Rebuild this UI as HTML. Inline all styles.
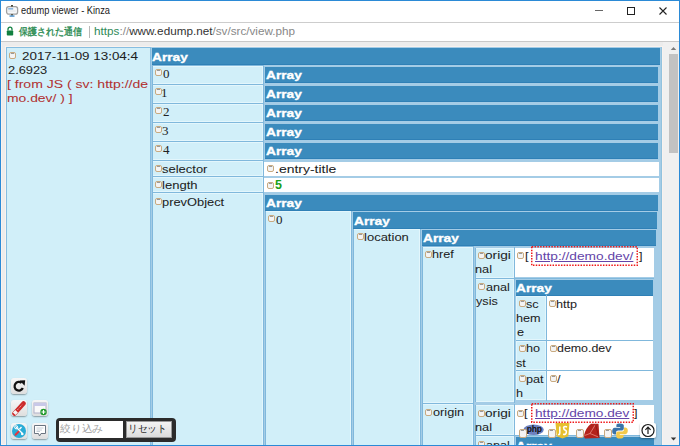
<!DOCTYPE html><html><head><meta charset="utf-8"><style>
*{margin:0;padding:0;box-sizing:border-box}
html,body{width:680px;height:446px;overflow:hidden;background:#ececec;position:relative;font-family:"Liberation Sans",sans-serif}
div,span,i,svg{position:absolute;display:block}
span{white-space:pre;line-height:0;height:0}
.v{font-size:11.5px;letter-spacing:0px;color:#1e1e1e;-webkit-text-stroke:0.05px currentColor}
.b{font-size:11.5px;letter-spacing:0px;color:#fff;font-weight:bold;-webkit-text-stroke:0.35px #fff}
.s{font-family:"Liberation Serif",serif;font-size:13px;color:#222}
.g{font-size:12.5px;color:#18a018;font-weight:bold}
.t{font-size:10.5px;color:#1a1a1a}
.u{font-size:11.5px;color:#333}
.j{font-size:9.5px;color:#3a8a5a}
.ic{width:7px;height:7px;border:1px solid #c8aa80;border-radius:2px;background:#f4f4f4}
.ic:after{content:"";position:absolute;left:1px;top:0;width:3px;height:1px;background:#9a9a9a}
</style></head><body>
<div style="left:1px;top:1px;width:678px;height:21px;background:#fff;"></div>
<div style="left:1px;top:22px;width:678px;height:1px;background:#cdcdcd;"></div>
<div style="left:1px;top:23px;width:678px;height:18px;background:#fff;"></div>
<div style="left:1px;top:41px;width:678px;height:1px;background:#c8c8c8;"></div>
<div style="left:1px;top:42px;width:1px;height:403px;background:#f9f2ee;"></div>
<div style="left:5px;top:46px;width:658px;height:1px;background:#f9f2ee;"></div>
<div style="left:5px;top:46px;width:1px;height:399px;background:#f9f2ee;"></div>
<div style="left:662px;top:46px;width:1px;height:399px;background:#f9f2ee;"></div>
<div style="left:1px;top:444px;width:678px;height:1px;background:#f9f2ee;"></div>
<div style="left:6px;top:47px;width:145px;height:400px;background:#d1eff9;border:1px solid #86bde0;"></div>
<div style="left:151px;top:47px;width:511px;height:400px;background:#a4cce6;"></div>
<div style="left:661px;top:47px;width:1px;height:400px;background:#92c2de;"></div>
<div style="left:152px;top:48px;width:508px;height:17px;background:#3b8bbd;box-shadow:inset 0 -1px 0 #2f80b6;"></div>
<div style="left:152px;top:65px;width:112px;height:1px;background:#80b8dc;"></div>
<div style="left:152px;top:66px;width:111px;height:18px;background:#d1eff9;box-shadow:inset 0 0 0 1px #e3f6fc;"></div>
<div style="left:152px;top:66px;width:1px;height:18px;background:#80b8dc;"></div>
<div style="left:263px;top:65px;width:1px;height:20px;background:#80b8dc;"></div>
<div style="left:265px;top:67px;width:393px;height:16px;background:#3b8bbd;box-shadow:inset 0 -1px 0 #2f80b6;"></div>
<div style="left:152px;top:84px;width:112px;height:1px;background:#80b8dc;"></div>
<div style="left:152px;top:85px;width:111px;height:18px;background:#d1eff9;box-shadow:inset 0 0 0 1px #e3f6fc;"></div>
<div style="left:152px;top:85px;width:1px;height:18px;background:#80b8dc;"></div>
<div style="left:263px;top:84px;width:1px;height:20px;background:#80b8dc;"></div>
<div style="left:265px;top:86px;width:393px;height:16px;background:#3b8bbd;box-shadow:inset 0 -1px 0 #2f80b6;"></div>
<div style="left:152px;top:103px;width:112px;height:1px;background:#80b8dc;"></div>
<div style="left:152px;top:104px;width:111px;height:18px;background:#d1eff9;box-shadow:inset 0 0 0 1px #e3f6fc;"></div>
<div style="left:152px;top:104px;width:1px;height:18px;background:#80b8dc;"></div>
<div style="left:263px;top:103px;width:1px;height:20px;background:#80b8dc;"></div>
<div style="left:265px;top:105px;width:393px;height:16px;background:#3b8bbd;box-shadow:inset 0 -1px 0 #2f80b6;"></div>
<div style="left:152px;top:122px;width:112px;height:1px;background:#80b8dc;"></div>
<div style="left:152px;top:123px;width:111px;height:18px;background:#d1eff9;box-shadow:inset 0 0 0 1px #e3f6fc;"></div>
<div style="left:152px;top:123px;width:1px;height:18px;background:#80b8dc;"></div>
<div style="left:263px;top:122px;width:1px;height:20px;background:#80b8dc;"></div>
<div style="left:265px;top:124px;width:393px;height:16px;background:#3b8bbd;box-shadow:inset 0 -1px 0 #2f80b6;"></div>
<div style="left:152px;top:141px;width:112px;height:1px;background:#80b8dc;"></div>
<div style="left:152px;top:142px;width:111px;height:18px;background:#d1eff9;box-shadow:inset 0 0 0 1px #e3f6fc;"></div>
<div style="left:152px;top:142px;width:1px;height:18px;background:#80b8dc;"></div>
<div style="left:263px;top:141px;width:1px;height:20px;background:#80b8dc;"></div>
<div style="left:265px;top:143px;width:393px;height:16px;background:#3b8bbd;box-shadow:inset 0 -1px 0 #2f80b6;"></div>
<div style="left:152px;top:160px;width:112px;height:1px;background:#80b8dc;"></div>
<div style="left:152px;top:161px;width:111px;height:15px;background:#d1eff9;box-shadow:inset 0 0 0 1px #e3f6fc;"></div>
<div style="left:152px;top:161px;width:1px;height:15px;background:#80b8dc;"></div>
<div style="left:263px;top:160px;width:1px;height:17px;background:#80b8dc;"></div>
<div style="left:264px;top:162px;width:395px;height:14px;background:#fff;"></div>
<div style="left:152px;top:176px;width:112px;height:1px;background:#80b8dc;"></div>
<div style="left:152px;top:177px;width:111px;height:15px;background:#d1eff9;box-shadow:inset 0 0 0 1px #e3f6fc;"></div>
<div style="left:152px;top:177px;width:1px;height:15px;background:#80b8dc;"></div>
<div style="left:263px;top:176px;width:1px;height:17px;background:#80b8dc;"></div>
<div style="left:264px;top:178px;width:395px;height:14px;background:#fff;"></div>
<div style="left:152px;top:192px;width:112px;height:1px;background:#80b8dc;"></div>
<div style="left:152px;top:193px;width:111px;height:253px;background:#d1eff9;box-shadow:inset 0 0 0 1px #e3f6fc;"></div>
<div style="left:152px;top:193px;width:1px;height:253px;background:#80b8dc;"></div>
<div style="left:263px;top:192px;width:1px;height:254px;background:#80b8dc;"></div>
<div style="left:265px;top:195px;width:393px;height:16px;background:#3b8bbd;box-shadow:inset 0 -1px 0 #2f80b6;"></div>
<div style="left:265px;top:211px;width:86px;height:235px;background:#d1eff9;box-shadow:inset 0 0 0 1px #e3f6fc;"></div>
<div style="left:265px;top:211px;width:1px;height:235px;background:#80b8dc;"></div>
<div style="left:351px;top:211px;width:1px;height:235px;background:#80b8dc;"></div>
<div style="left:353px;top:212px;width:304px;height:17px;background:#3b8bbd;box-shadow:inset 0 -1px 0 #2f80b6;"></div>
<div style="left:353px;top:229px;width:67px;height:217px;background:#d1eff9;box-shadow:inset 0 0 0 1px #e3f6fc;"></div>
<div style="left:353px;top:229px;width:1px;height:217px;background:#80b8dc;"></div>
<div style="left:420px;top:229px;width:1px;height:217px;background:#80b8dc;"></div>
<div style="left:422px;top:230px;width:234px;height:16px;background:#3b8bbd;box-shadow:inset 0 -1px 0 #2f80b6;"></div>
<div style="left:422px;top:246px;width:52px;height:1px;background:#80b8dc;"></div>
<div style="left:422px;top:247px;width:51px;height:156px;background:#d1eff9;box-shadow:inset 0 0 0 1px #e3f6fc;"></div>
<div style="left:422px;top:247px;width:1px;height:156px;background:#80b8dc;"></div>
<div style="left:473px;top:246px;width:1px;height:158px;background:#80b8dc;"></div>
<div style="left:475px;top:248px;width:39px;height:30px;background:#d1eff9;box-shadow:inset 0 0 0 1px #e3f6fc;"></div>
<div style="left:475px;top:248px;width:1px;height:30px;background:#80b8dc;"></div>
<div style="left:514px;top:247px;width:1px;height:32px;background:#80b8dc;"></div>
<div style="left:515px;top:248px;width:139px;height:29px;background:#fff;"></div>
<div style="left:475px;top:278px;width:179px;height:1px;background:#80b8dc;"></div>
<div style="left:475px;top:279px;width:39px;height:123px;background:#d1eff9;box-shadow:inset 0 0 0 1px #e3f6fc;"></div>
<div style="left:475px;top:279px;width:1px;height:123px;background:#80b8dc;"></div>
<div style="left:514px;top:278px;width:1px;height:125px;background:#80b8dc;"></div>
<div style="left:516px;top:280px;width:137px;height:16px;background:#3b8bbd;box-shadow:inset 0 -1px 0 #2f80b6;"></div>
<div style="left:516px;top:296px;width:30px;height:44px;background:#d1eff9;box-shadow:inset 0 0 0 1px #e3f6fc;"></div>
<div style="left:546px;top:295px;width:1px;height:46px;background:#80b8dc;"></div>
<div style="left:547px;top:296px;width:106px;height:44px;background:#fff;"></div>
<div style="left:516px;top:340px;width:137px;height:1px;background:#80b8dc;"></div>
<div style="left:516px;top:341px;width:30px;height:29px;background:#d1eff9;box-shadow:inset 0 0 0 1px #e3f6fc;"></div>
<div style="left:546px;top:340px;width:1px;height:31px;background:#80b8dc;"></div>
<div style="left:547px;top:341px;width:106px;height:29px;background:#fff;"></div>
<div style="left:516px;top:370px;width:137px;height:1px;background:#80b8dc;"></div>
<div style="left:516px;top:371px;width:30px;height:29px;background:#d1eff9;box-shadow:inset 0 0 0 1px #e3f6fc;"></div>
<div style="left:546px;top:370px;width:1px;height:31px;background:#80b8dc;"></div>
<div style="left:547px;top:371px;width:106px;height:29px;background:#fff;"></div>
<div style="left:422px;top:403px;width:52px;height:1px;background:#80b8dc;"></div>
<div style="left:422px;top:404px;width:51px;height:42px;background:#d1eff9;box-shadow:inset 0 0 0 1px #e3f6fc;"></div>
<div style="left:422px;top:404px;width:1px;height:42px;background:#80b8dc;"></div>
<div style="left:473px;top:403px;width:1px;height:43px;background:#80b8dc;"></div>
<div style="left:475px;top:405px;width:39px;height:30px;background:#d1eff9;box-shadow:inset 0 0 0 1px #e3f6fc;"></div>
<div style="left:475px;top:405px;width:1px;height:30px;background:#80b8dc;"></div>
<div style="left:514px;top:404px;width:1px;height:32px;background:#80b8dc;"></div>
<div style="left:515px;top:405px;width:139px;height:30px;background:#fff;"></div>
<div style="left:475px;top:435px;width:179px;height:1px;background:#80b8dc;"></div>
<div style="left:475px;top:436px;width:39px;height:10px;background:#d1eff9;box-shadow:inset 0 0 0 1px #e3f6fc;"></div>
<div style="left:475px;top:436px;width:1px;height:10px;background:#80b8dc;"></div>
<div style="left:514px;top:435px;width:1px;height:11px;background:#80b8dc;"></div>
<div style="left:516px;top:437px;width:138px;height:9px;background:#3b8bbd;box-shadow:inset 0 -1px 0 #2f80b6;"></div>
<svg style="left:531px;top:246px" width="107" height="20"><rect x="0.75" y="0.75" width="105.5" height="18.5" fill="none" stroke="#f01818" stroke-width="1.5" stroke-dasharray="1.5,1.3"/></svg>
<svg style="left:531px;top:403px" width="103" height="20"><rect x="0.75" y="0.75" width="101.5" height="18.5" fill="none" stroke="#f01818" stroke-width="1.5" stroke-dasharray="1.5,1.3"/></svg>
<div style="left:56px;top:418px;width:120px;height:24px;background:#2b2b2b;border-radius:4px;"></div>
<div style="left:59px;top:421px;width:64px;height:17px;background:#fff;"></div>
<div style="left:126px;top:421px;width:46px;height:17px;background:linear-gradient(#f4f4f4,#dcdcdc);border:1px solid #999;"></div>
<div style="left:663px;top:42px;width:16px;height:404px;background:#f0f0f0;"></div>
<div style="left:669px;top:54px;width:9px;height:99px;background:#c2c2c2;"></div>
<svg style="left:5px;top:4px;" width="14" height="13" viewBox="0 0 14 13"><rect x="1.6" y="2.6" width="11" height="7.6" rx="2.2" fill="#f6f8fa" stroke="#a0a0a0" stroke-width="1.3"/><rect x="3.2" y="4" width="5" height="1.6" fill="#8ab8e0"/><rect x="3.2" y="6.5" width="7.5" height="1" fill="#dde2e6"/><rect x="6" y="1" width="2" height="1.6" fill="#4a4a3a"/><rect x="6" y="10.2" width="2" height="1.3" fill="#4a4a3a"/><rect x="4.5" y="11.4" width="5" height="1.3" fill="#3a86c8"/></svg>
<svg style="left:6px;top:26px;" width="8" height="10" viewBox="0 0 8 10"><path d="M2,4.5 V3.2 A2,2 0 0 1 6,3.2 V4.5" fill="none" stroke="#118040" stroke-width="1.3"/><rect x="0.8" y="4.5" width="6.4" height="5" rx="0.8" fill="#118040"/></svg>
<div style="left:89px;top:26px;width:1px;height:12px;background:#b8b8b8;"></div>
<div style="left:595px;top:10px;width:8px;height:1px;background:#666;"></div>
<div style="left:627px;top:7px;width:8px;height:8px;background:transparent;border:1px solid #222;"></div>
<svg style="left:658px;top:6px;" width="10" height="10" viewBox="0 0 10 10"><path d="M1.5,1.5 L8.5,8.5 M8.5,1.5 L1.5,8.5" stroke="#222" stroke-width="1.1"/></svg>
<div style="left:11px;top:378px;width:16px;height:16px;border-radius:3px;background:linear-gradient(#f6f6f6,#dedede);box-shadow:0 1px 1.5px rgba(0,0,0,.35)"></div>
<svg style="left:11px;top:378px;" width="16" height="16" viewBox="0 0 16 16"><path d="M10.6,4.9 A4.3,4.3 0 1 0 11.8,10" fill="none" stroke="#111" stroke-width="2.3"/><path d="M8.6,2.4 L14.2,2.2 L13.6,7.8 Z" fill="#111"/></svg>
<div style="left:11px;top:400px;width:16px;height:16px;border-radius:3px;background:linear-gradient(#f6f6f6,#dedede);box-shadow:0 1px 1.5px rgba(0,0,0,.35)"></div>
<svg style="left:11px;top:400px;" width="16" height="16" viewBox="0 0 16 16"><path d="M3.5,13.5 L12.5,3.5" stroke="#cc2a2a" stroke-width="4.5" stroke-linecap="round"/><path d="M3.2,13.8 L5.6,11.2" stroke="#f6f6f6" stroke-width="3.6"/><path d="M6.5,9.8 L11,4.8" stroke="#fff" stroke-width="0.7" stroke-dasharray="1,1"/></svg>
<div style="left:32px;top:400px;width:16px;height:16px;border-radius:3px;background:linear-gradient(#f6f6f6,#dedede);box-shadow:0 1px 1.5px rgba(0,0,0,.35)"></div>
<svg style="left:32px;top:400px;" width="16" height="16" viewBox="0 0 16 16"><rect x="2" y="3" width="12" height="10" fill="#fafafa" stroke="#b0b0c8" stroke-width="1"/><rect x="2" y="3" width="12" height="3" fill="#c8c8e8"/><circle cx="11.5" cy="12" r="3.2" fill="#1e9a2a"/><path d="M11.5,10 V14 M9.5,12 H13.5" stroke="#fff" stroke-width="1.2"/></svg>
<div style="left:11px;top:423px;width:16px;height:16px;border-radius:3px;background:linear-gradient(#f6f6f6,#dedede);box-shadow:0 1px 1.5px rgba(0,0,0,.35)"></div>
<svg style="left:11px;top:423px;" width="16" height="16" viewBox="0 0 16 16"><circle cx="8" cy="8" r="7" fill="#29acd6"/><path d="M4.5,11.8 L8,8.3" stroke="#e8343a" stroke-width="2" stroke-linecap="round"/><path d="M5,4 L11.5,10.5" stroke="#fff" stroke-width="1.3"/><circle cx="5.2" cy="4.3" r="1.6" fill="none" stroke="#fff" stroke-width="1"/><circle cx="11.3" cy="11" r="1.3" fill="#fff"/><path d="M10.5,4 L8.5,6.2" stroke="#fff" stroke-width="1.3"/></svg>
<div style="left:32px;top:423px;width:16px;height:16px;border-radius:3px;background:linear-gradient(#f6f6f6,#dedede);box-shadow:0 1px 1.5px rgba(0,0,0,.35)"></div>
<svg style="left:32px;top:423px;" width="16" height="16" viewBox="0 0 16 16"><path d="M2.5,2.5 H13.5 V10.5 H9 L7.5,13 L6.5,10.5 H2.5 Z" fill="#fff" stroke="#6a7480" stroke-width="1"/><path d="M4.5,5 H11.5 M4.5,7 H10 M4.5,8.5 H8" stroke="#c0c8d0" stroke-width="0.9"/></svg>
<svg style="left:522px;top:424px;" width="23" height="12" viewBox="0 0 23 12"><ellipse cx="11.6" cy="5.8" rx="10.2" ry="5.3" fill="#6c80c0"/><text x="12.2" y="8.2" text-anchor="middle" font-family="Liberation Sans" font-weight="bold" font-size="8.5" fill="#111" letter-spacing="-0.3">php</text></svg>
<svg style="left:555px;top:423px;" width="15" height="16" viewBox="0 0 15 16"><path d="M0.5,0 H14.5 L13.3,13.2 L7.5,15.5 L1.7,13.2 Z" fill="#e6c02e"/><path d="M4.8,3.5 V10 Q4.8,12 3,11.5 M12,4 Q9.5,3 8.6,4.5 Q8.5,6.5 10.4,7.2 Q12,8 11,10.5 Q9.8,12 8.2,11" fill="none" stroke="#fff" stroke-width="1.5"/></svg>
<svg style="left:583px;top:423px;" width="17" height="16" viewBox="0 0 17 16"><path d="M8,0.8 L15.5,0.8 L16.5,15 L2,15.5 L0.8,13 Q2.5,5 8,0.8 Z" fill="#b3231c"/><path d="M1.5,12.5 L7,10.5 L12.5,1.5 M7,10.5 L15.5,14" stroke="#e88a80" stroke-width="0.8" fill="none"/><path d="M12.5,1.5 L16,14.5" stroke="#8a1510" stroke-width="0.8"/></svg>
<svg style="left:612px;top:423px;" width="16" height="16" viewBox="0 0 16 16"><path d="M8,0.5 C4,0.5 4.4,2.2 4.4,2.2 V4 H8.2 V4.8 H2.8 C0.8,4.8 0.2,6.6 0.2,8.4 C0.2,10.6 1.6,11.4 2.6,11.4 H4 V9.6 C4,8.2 5.1,7.4 6.3,7.4 H10 C11,7.4 11.8,6.6 11.8,5.6 V2.6 C11.8,1.6 10.8,0.5 8,0.5 Z" fill="#3b73a8"/><path d="M8,15.5 C12,15.5 11.6,13.8 11.6,13.8 V12 H7.8 V11.2 H13.2 C15.2,11.2 15.8,9.4 15.8,7.6 C15.8,5.4 14.4,4.6 13.4,4.6 H12 V6.4 C12,7.8 10.9,8.6 9.7,8.6 H6 C5,8.6 4.2,9.4 4.2,10.4 V13.4 C4.2,14.4 5.2,15.5 8,15.5 Z" fill="#f3c94a"/></svg>
<div style="left:640px;top:423px;width:16px;height:15px;border-radius:2px;background:#fff;box-shadow:0 1px 2px rgba(0,0,0,.35)"></div>
<svg style="left:640px;top:423px;" width="16" height="15" viewBox="0 0 16 15"><circle cx="8" cy="7.5" r="6" fill="none" stroke="#1a1a1a" stroke-width="1.2"/><path d="M8,11 V4.2 M5.4,6.8 L8,4.2 L10.6,6.8" fill="none" stroke="#1a1a1a" stroke-width="1.2"/></svg>
<svg style="left:670px;top:46px;" width="7" height="5" viewBox="0 0 7 5"><path d="M0.8,4 L3.5,1 L6.2,4 Z" fill="#7a7a7a"/></svg>
<svg style="left:670px;top:437px;" width="7" height="5" viewBox="0 0 7 5"><path d="M0.8,0.5 L3.5,3.5 L6.2,0.5 Z" fill="#333"/></svg>
<i class="ic" style="left:519px;top:429px;width:8px;height:9px"></i>
<i class="ic" style="left:548px;top:429px;width:8px;height:9px"></i>
<i class="ic" style="left:576px;top:429px;width:8px;height:9px"></i>
<i class="ic" style="left:604px;top:429px;width:8px;height:9px"></i>
<i class="ic" style="left:9px;top:52px"></i>
<i class="ic" style="left:155px;top:69px"></i>
<i class="ic" style="left:155px;top:88px"></i>
<i class="ic" style="left:155px;top:107px"></i>
<i class="ic" style="left:155px;top:126px"></i>
<i class="ic" style="left:155px;top:145px"></i>
<i class="ic" style="left:155px;top:165px"></i>
<i class="ic" style="left:267px;top:165px"></i>
<i class="ic" style="left:155px;top:181px"></i>
<i class="ic" style="left:267px;top:182px"></i>
<i class="ic" style="left:155px;top:198px"></i>
<i class="ic" style="left:268px;top:215px"></i>
<i class="ic" style="left:357px;top:233px"></i>
<i class="ic" style="left:425px;top:251px"></i>
<i class="ic" style="left:478px;top:252px"></i>
<i class="ic" style="left:517px;top:252px"></i>
<i class="ic" style="left:478px;top:283px"></i>
<i class="ic" style="left:519px;top:300px"></i>
<i class="ic" style="left:549px;top:300px"></i>
<i class="ic" style="left:519px;top:345px"></i>
<i class="ic" style="left:550px;top:345px"></i>
<i class="ic" style="left:519px;top:375px"></i>
<i class="ic" style="left:550px;top:375px"></i>
<i class="ic" style="left:425px;top:409px"></i>
<i class="ic" style="left:478px;top:410px"></i>
<i class="ic" style="left:517px;top:410px"></i>
<i class="ic" style="left:478px;top:441px"></i>
<span class="t" style="left:21.0px;top:10px;;transform:scaleX(0.8812);transform-origin:0 0">edump viewer - Kinza</span>
<span class="j" style="left:19.0px;top:32px;color:#2b8c52;-webkit-text-stroke:0.35px #2b8c52;transform:scaleX(0.8986);transform-origin:0 0">保護された通信</span>
<span class="u" style="left:93.98214285714286px;top:31px;;transform:scaleX(1.0179);transform-origin:0 0"><b style="font-weight:normal;color:#2f8a58">https</b><b style="font-weight:normal;color:#888">://</b>www.edump.net<b style="font-weight:normal;color:#888">/sv/src/view.php</b></span>
<span class="v" style="left:22.0px;top:56px;;transform:scaleX(1.1650);transform-origin:0 0">2017-11-09 13:04:4</span>
<span class="v" style="left:8.0px;top:70px;;transform:scaleX(1.1143);transform-origin:0 0">2.6923</span>
<span class="v" style="left:6.780701754385965px;top:84px;color:#b23232;transform:scaleX(1.2193);transform-origin:0 0">[ from JS ( sv: http://de</span>
<span class="v" style="left:6.7924528301886795px;top:98px;color:#b23232;transform:scaleX(1.2075);transform-origin:0 0">mo.dev/ ) ]</span>
<span class="b" style="left:151.81034482758622px;top:57px;;transform:scaleX(1.1897);transform-origin:0 0">Array</span>
<span class="s" style="left:163px;top:74px;">0</span>
<span class="b" style="left:265.8103448275862px;top:75px;;transform:scaleX(1.1897);transform-origin:0 0">Array</span>
<span class="s" style="left:161px;top:93px;">1</span>
<span class="b" style="left:265.8103448275862px;top:94px;;transform:scaleX(1.1897);transform-origin:0 0">Array</span>
<span class="s" style="left:163px;top:112px;">2</span>
<span class="b" style="left:265.8103448275862px;top:113px;;transform:scaleX(1.1897);transform-origin:0 0">Array</span>
<span class="s" style="left:162px;top:131px;">3</span>
<span class="b" style="left:265.8103448275862px;top:132px;;transform:scaleX(1.1897);transform-origin:0 0">Array</span>
<span class="s" style="left:163px;top:150px;">4</span>
<span class="b" style="left:265.8103448275862px;top:151px;;transform:scaleX(1.1897);transform-origin:0 0">Array</span>
<span class="v" style="left:161.87179487179486px;top:169px;;transform:scaleX(1.1282);transform-origin:0 0">selector</span>
<span class="v" style="left:274.7857142857143px;top:169px;;transform:scaleX(1.2143);transform-origin:0 0">.entry-title</span>
<span class="v" style="left:161.86666666666667px;top:185px;;transform:scaleX(1.1333);transform-origin:0 0">length</span>
<span class="g" style="left:275px;top:185px;">5</span>
<span class="v" style="left:161.88181818181818px;top:202px;;transform:scaleX(1.1182);transform-origin:0 0">prevObject</span>
<span class="b" style="left:265.8103448275862px;top:203px;;transform:scaleX(1.1897);transform-origin:0 0">Array</span>
<span class="s" style="left:276px;top:220px;">0</span>
<span class="b" style="left:353.8103448275862px;top:221px;;transform:scaleX(1.1897);transform-origin:0 0">Array</span>
<span class="v" style="left:363.86842105263156px;top:237px;;transform:scaleX(1.1316);transform-origin:0 0">location</span>
<span class="b" style="left:422.8103448275862px;top:238px;;transform:scaleX(1.1897);transform-origin:0 0">Array</span>
<span class="v" style="left:431.9px;top:254px;;transform:scaleX(1.1000);transform-origin:0 0">href</span>
<span class="v" style="left:485.0px;top:255px;;transform:scaleX(1.1905);transform-origin:0 0">origi</span>
<span class="v" style="left:474.89285714285717px;top:269px;;transform:scaleX(1.1071);transform-origin:0 0">nal</span>
<span class="v" style="left:524.9px;top:256px;;transform:scaleX(1.1000);transform-origin:0 0">[</span>
<span class="v" style="left:535.0px;top:256px;color:#6444a8;text-decoration:underline;-webkit-text-stroke:0px;transform:scaleX(1.1928);transform-origin:0 0">http://demo.dev/</span>
<span class="v" style="left:639.0px;top:256px;;transform:scaleX(1.1000);transform-origin:0 0">]</span>
<span class="v" style="left:486.0px;top:287px;;transform:scaleX(1.1000);transform-origin:0 0">anal</span>
<span class="v" style="left:476.0px;top:301px;;transform:scaleX(1.1000);transform-origin:0 0">ysis</span>
<span class="b" style="left:515.8103448275862px;top:288px;;transform:scaleX(1.1897);transform-origin:0 0">Array</span>
<span class="v" style="left:525.9px;top:304px;;transform:scaleX(1.1000);transform-origin:0 0">sc</span>
<span class="v" style="left:515.9px;top:318px;;transform:scaleX(1.1000);transform-origin:0 0">hem</span>
<span class="v" style="left:517.0px;top:332px;;transform:scaleX(1.1000);transform-origin:0 0">e</span>
<span class="v" style="left:555.9px;top:304px;;transform:scaleX(1.1000);transform-origin:0 0">http</span>
<span class="v" style="left:525.9px;top:348px;;transform:scaleX(1.1000);transform-origin:0 0">ho</span>
<span class="v" style="left:515.9px;top:363px;;transform:scaleX(1.1000);transform-origin:0 0">st</span>
<span class="v" style="left:557.0px;top:348px;;transform:scaleX(1.0784);transform-origin:0 0">demo.dev</span>
<span class="v" style="left:525.9px;top:379px;;transform:scaleX(1.1000);transform-origin:0 0">pat</span>
<span class="v" style="left:515.9px;top:393px;;transform:scaleX(1.1000);transform-origin:0 0">h</span>
<span class="v" style="left:557.0px;top:379px;;transform:scaleX(1.1000);transform-origin:0 0">/</span>
<span class="v" style="left:433.0px;top:412px;;transform:scaleX(1.1071);transform-origin:0 0">origin</span>
<span class="v" style="left:485.0px;top:413px;;transform:scaleX(1.1905);transform-origin:0 0">origi</span>
<span class="v" style="left:474.89285714285717px;top:427px;;transform:scaleX(1.1071);transform-origin:0 0">nal</span>
<span class="v" style="left:523.9px;top:413px;;transform:scaleX(1.1000);transform-origin:0 0">[</span>
<span class="v" style="left:535.0px;top:413px;color:#6444a8;text-decoration:underline;-webkit-text-stroke:0px;transform:scaleX(1.1899);transform-origin:0 0">http://demo.dev</span>
<span class="v" style="left:634.0px;top:413px;;transform:scaleX(1.1000);transform-origin:0 0">]</span>
<span class="v" style="left:486.0px;top:445px;;transform:scaleX(1.1000);transform-origin:0 0">anal</span>
<span class="b" style="left:515.8103448275862px;top:446px;;transform:scaleX(1.1897);transform-origin:0 0">Array</span>
<span class="j" style="left:60.0px;top:429px;color:#a0a0a0;font-size:10px;transform:scaleX(1.0769);transform-origin:0 0">絞り込み</span>
<span class="j" style="left:128.05555555555554px;top:429px;color:#222;font-size:10px;transform:scaleX(0.9722);transform-origin:0 0">リセット</span>
<div style="left:0px;top:0px;width:680px;height:1px;background:#2b8ad6;"></div>
<div style="left:0px;top:0px;width:1px;height:446px;background:#2b8ad6;"></div>
<div style="left:679px;top:0px;width:1px;height:446px;background:#2b8ad6;"></div>
<div style="left:0px;top:445px;width:680px;height:1px;background:#2b8ad6;"></div>
</body></html>
